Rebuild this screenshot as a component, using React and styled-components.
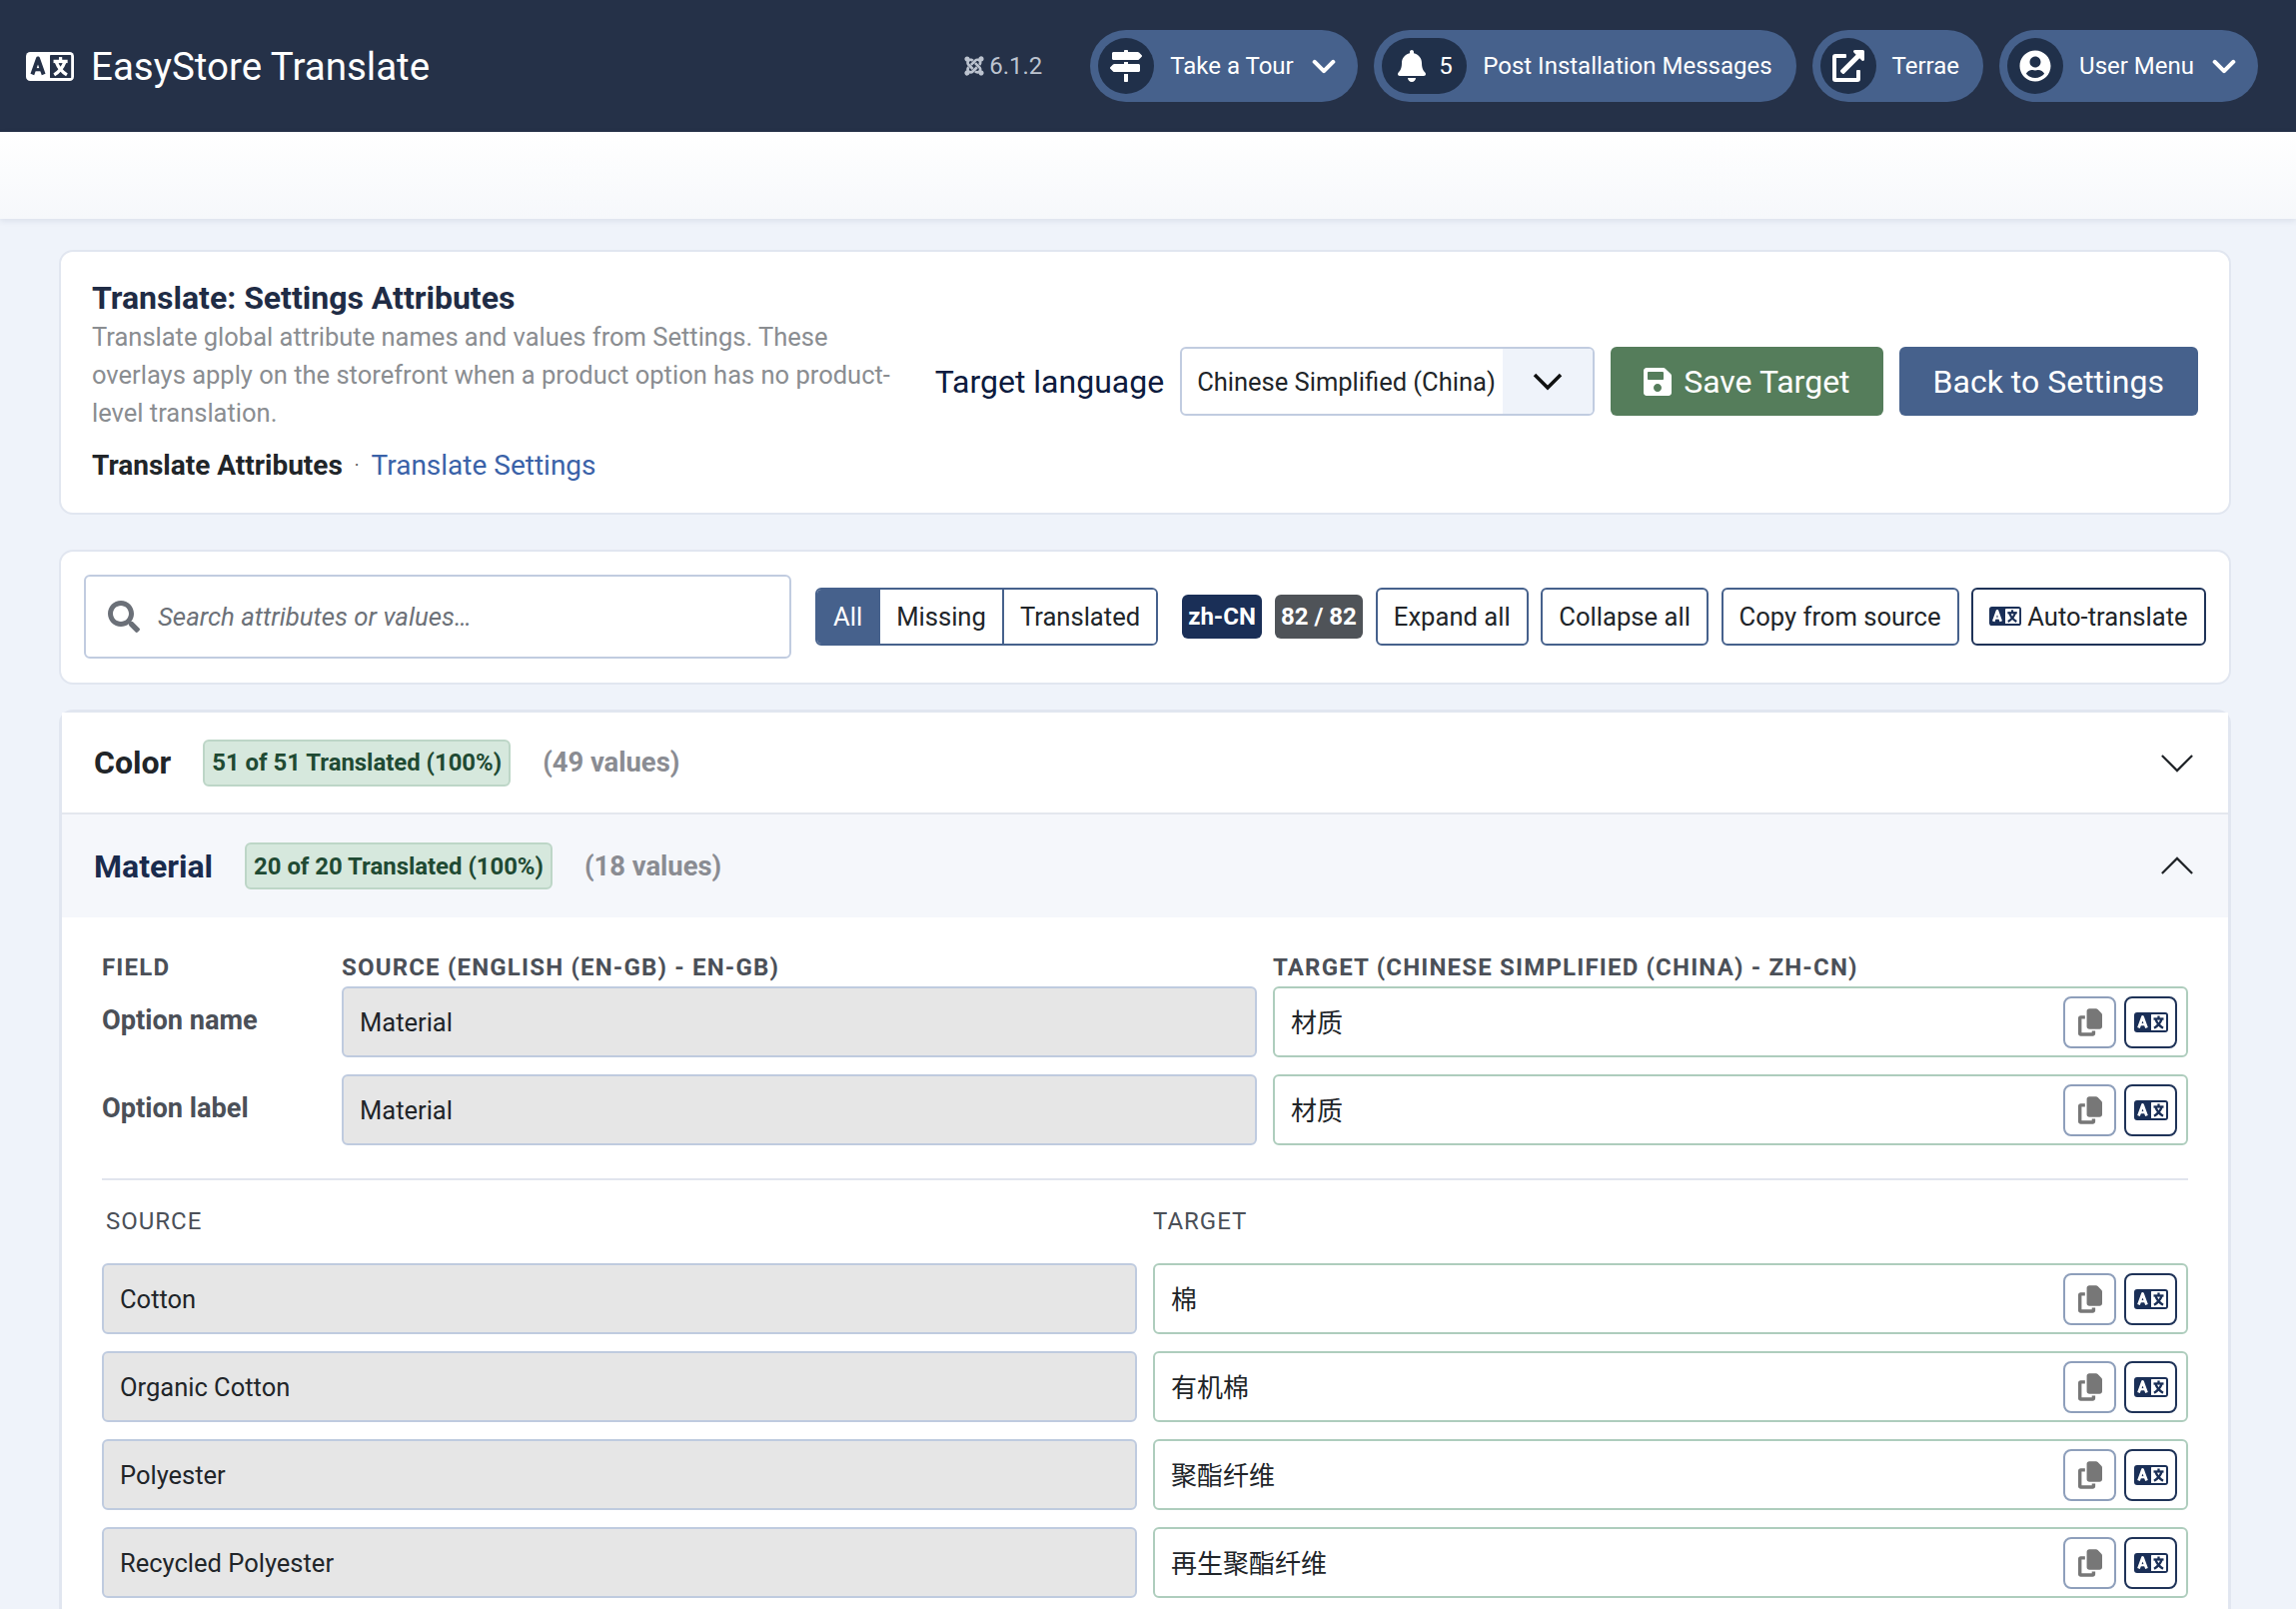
import React from 'react'
import styled, { createGlobalStyle } from 'styled-components'
import { FaMapSigns, FaBell, FaExternalLinkAlt, FaUserCircle, FaJoomla, FaSave, FaSearch } from 'react-icons/fa'
import { FaCopy } from 'react-icons/fa6'

const GlobalStyle = createGlobalStyle`
  html, body {
    margin: 0;
    height: 100%;
    overflow: hidden;
    background: #eff3fa;
    font-family: Roboto, "Noto Sans CJK SC", sans-serif;
    color: #212529;
  }
  * { box-sizing: border-box; }
`

const Header = styled.header`
  height: 132px;
  background: #253148;
  display: flex;
  align-items: center;
  padding: 0 38px 0 26px;
`

const Brand = styled.div`
  display: flex;
  align-items: center;
  gap: 17px;
  color: #fff;
  font-size: 38.5px;
  flex: 1;
  svg { width: 48px; height: 29px; }
`

const Version = styled.div`
  display: flex;
  align-items: center;
  gap: 4px;
  color: #bcc3cf;
  font-size: 24px;
  margin-right: 48px;
  svg { width: 22px; height: 22px; }
`

const Pills = styled.nav`
  display: flex;
  gap: 16px;
`

const Pill = styled.div`
  height: 72px;
  background: #46618c;
  border-radius: 36px;
  display: flex;
  align-items: center;
  padding: 0 ${p => p.$end}px 0 8px;
  color: #fff;
  font-size: 24px;
  white-space: nowrap;
`

const PillIcon = styled.span`
  height: 56px;
  min-width: 56px;
  padding: 0 ${p => (p.$wide ? 14.5 : 0)}px;
  border-radius: 28px;
  background: #20304a;
  display: flex;
  align-items: center;
  justify-content: center;
  gap: 11px;
  margin-right: 16px;
  svg { width: 32px; height: 32px; }
`

const PillChevron = styled.svg`
  width: 24px;
  height: 15px;
  margin-left: 18px;
  fill: none;
  stroke: #fff;
  stroke-width: 4.5;
  stroke-linecap: round;
  stroke-linejoin: round;
`

const SubBar = styled.div`
  height: 87px;
  background: linear-gradient(#ffffff, #f6f8fb);
  box-shadow: 0 2px 6px rgba(40, 60, 100, 0.1);
`

const Main = styled.main`
  padding: 31px 65px 0 59px;
  display: flex;
  flex-direction: column;
`

const Card = styled.section`
  background: #fff;
  border: 2px solid #e1e6f0;
  border-radius: 14px;
  margin-bottom: ${p => p.$gap || 0}px;
`

const TitleCard = styled(Card)`
  height: 265px;
  padding: 26px 31px 0 31px;
  display: flex;
`

const Intro = styled.div`
  width: 810px;
  flex: none;
`

const Title = styled.h1`
  margin: 0;
  font-size: 32px;
  line-height: 40px;
  font-weight: 700;
  color: #1f2c45;
`

const Lead = styled.p`
  margin: 0;
  font-size: 25.5px;
  line-height: 38px;
  color: #8a8d91;
`

const Crumbs = styled.div`
  margin-top: 15px;
  font-size: 28px;
  line-height: 38px;
  display: flex;
  align-items: center;
  gap: 12px;
  color: #3a62a8;
  b { color: #212529; font-weight: 700; }
  i { color: #555; font-style: normal; font-size: 18px; }
`

const Actions = styled.div`
  flex: 1;
  display: flex;
  align-items: center;
  justify-content: flex-end;
  gap: 16px;
  padding-bottom: 28px;
  white-space: nowrap;
`

const ActionLabel = styled.span`
  font-size: 32px;
  color: #0d1b3e;
`

const Select = styled.div`
  width: 415px;
  height: 69px;
  background: #fff;
  border: 2px solid #c1cce0;
  border-radius: 6px;
  display: flex;
  align-items: center;
  justify-content: space-between;
  padding-left: 15px;
  font-size: 25.5px;
  overflow: hidden;
`

const SelectArrow = styled.span`
  width: 90px;
  height: 100%;
  background: #eff3fa;
  display: flex;
  align-items: center;
  justify-content: center;
  svg { width: 30px; height: 18px; fill: none; stroke: #111; stroke-width: 3.5; }
`

const Solid = styled.div`
  height: 69px;
  padding: 0 ${p => p.$pad}px;
  background: ${p => p.$bg};
  color: #fff;
  border-radius: 6px;
  font-size: 32px;
  display: flex;
  align-items: center;
  gap: 12px;
  svg { width: 28px; height: 32px; }
`

const ToolCard = styled(Card)`
  height: 135px;
  padding: 0 23px 2px;
  display: flex;
  align-items: center;
  white-space: nowrap;
`

const Search = styled.div`
  width: 708px;
  height: 84px;
  border: 2px solid #c1cce0;
  border-radius: 6px;
  display: flex;
  align-items: center;
  padding-left: 22px;
  gap: 18px;
  margin-right: 24px;
  font-size: 25.8px;
  font-style: italic;
  color: #6c7178;
  svg { width: 32px; height: 32px; color: #6b7078; }
`

const Segments = styled.div`
  display: flex;
  height: 58px;
  border: 2px solid #46618c;
  border-radius: 6px;
  overflow: hidden;
  margin-right: 24px;
`

const Segment = styled.span`
  padding: 0 16px;
  display: flex;
  align-items: center;
  font-size: 25.6px;
  background: ${p => (p.$active ? '#46618c' : '#fff')};
  color: ${p => (p.$active ? '#fff' : '#212529')};
  & + & { border-left: 2px solid #46618c; }
`

const Tag = styled.span`
  height: 44px;
  padding: 0 6px;
  margin-right: 13px;
  display: flex;
  align-items: center;
  background: ${p => p.$bg};
  color: #fff;
  font-size: 24px;
  font-weight: 700;
  border-radius: 6px;
`

const ToolButton = styled.div`
  height: 58px;
  padding: 0 16px;
  margin-right: 12.7px;
  display: flex;
  align-items: center;
  gap: 6px;
  background: #fff;
  border: 2px solid ${p => (p.$dark ? '#1f3358' : '#46618c')};
  border-radius: 6px;
  font-size: 25.6px;
  &:last-child { margin-right: 0; }
  svg { width: 32px; height: 19px; color: #1a2f57; }
`

const AccordionCard = styled(Card)`
  border-width: 3px 3px 0 3px;
  border-radius: 14px 14px 0 0;
`

const AccordionRow = styled.div`
  height: ${p => p.$h}px;
  display: flex;
  align-items: center;
  padding: 0 34px 0 32px;
  background: ${p => (p.$open ? '#f5f7fb' : '#fff')};
  ${p => !p.$open && 'border-bottom: 2px solid #e4e7ee;'}
`

const RowName = styled.span`
  font-size: 32px;
  font-weight: 700;
  color: ${p => (p.$open ? '#1a2b4d' : '#212529')};
  margin-right: 32px;
`

const Badge = styled.span`
  height: 47px;
  padding: 0 7px;
  display: flex;
  align-items: center;
  background: #d6e8dd;
  border: 2px solid #bdd6c7;
  border-radius: 6px;
  color: #1f4a33;
  font-size: 23.9px;
  font-weight: 700;
`

const ValueCount = styled.span`
  font-size: 27.4px;
  font-weight: 700;
  color: #8a8c92;
  margin-left: 32px;
  flex: 1;
`

const RowChevron = styled.svg`
  width: 34px;
  height: 19px;
  fill: none;
  stroke: #212529;
  stroke-width: 2.4;
`

const Body = styled.div`
  padding: 36px 40px 60px 40px;
`

const FieldGrid = styled.div`
  display: grid;
  grid-template-columns: 224px 1fr 1fr;
  column-gap: 16px;
`

const FieldHead = styled.div`
  font-size: 24px;
  line-height: 28px;
  margin-bottom: 5px;
  font-weight: 700;
  letter-spacing: 1.18px;
  color: #4b5058;
  text-transform: uppercase;
`

const FieldName = styled.div`
  font-size: 27.2px;
  font-weight: 700;
  color: #4b5058;
  line-height: 68px;
  margin-bottom: 17px;
`

const Source = styled.div`
  height: 71px;
  padding: 0 16px;
  margin-bottom: 17px;
  display: flex;
  align-items: center;
  background: #e6e6e6;
  border: 2px solid #bfcbdf;
  border-radius: 6px;
  font-size: 25.5px;
`

const Target = styled(Source)`
  background: #fff;
  border-color: #aecdbd;
  justify-content: space-between;
  padding-right: 9px;
`

const TargetText = styled.span`
  font-size: 26px;
  margin-bottom: 3px;
`

const IconButtons = styled.span`
  display: flex;
  gap: 8px;
`

const IconButton = styled.span`
  width: 53px;
  height: 52px;
  display: flex;
  align-items: center;
  justify-content: center;
  border: 2px solid ${p => (p.$dark ? '#1f3358' : '#8e9fbb')};
  border-radius: 8px;
  color: ${p => (p.$dark ? '#1a2f57' : '#777')};
  svg {
    width: ${p => (p.$dark ? 34 : 24)}px;
    height: ${p => (p.$dark ? 20 : 28)}px;
  }
`

const Divider = styled.hr`
  margin: 16px 0 0;
  border: 0;
  border-top: 2px solid #e1e5ee;
`

const ValueGrid = styled.div`
  display: grid;
  grid-template-columns: 1fr 1fr;
  column-gap: 16px;
`

const ValueHead = styled.div`
  font-size: 24px;
  letter-spacing: 1px;
  line-height: 28px;
  color: #4b5058;
  padding: 27px 0 28px ${p => p.$pad}px;
  text-transform: uppercase;
`

// the language badge: a solid tile, an A on the left and a small sign on a cut out panel
const LangIcon = ({ hole }) => (
  <svg viewBox="0 0 34 20" preserveAspectRatio="none">
    <rect width="34" height="20" rx="3" fill="currentColor" />
    <rect x="17" y="2" width="15" height="16" rx="0.5" fill={hole} />
    <g fill="none" stroke={hole} strokeLinejoin="round">
      <polyline points="4.5,15.5 8.5,4.5 12.5,15.5" strokeWidth="2.8" />
      <line x1="6" y1="12.2" x2="11" y2="12.2" strokeWidth="2.2" />
    </g>
    <g fill="none" stroke="currentColor" strokeWidth="2.3">
      <line x1="24.5" y1="3.5" x2="24.5" y2="6.5" />
      <line x1="19.5" y1="6.5" x2="29.5" y2="6.5" />
      <path d="M21.5 7C23 11 26 14 29 15.8" />
      <path d="M27.5 7C26 11 23 14 20 15.8" />
    </g>
  </svg>
)

const RowTools = () => (
  <IconButtons>
    <IconButton><FaCopy /></IconButton>
    <IconButton $dark><LangIcon hole="#fff" /></IconButton>
  </IconButtons>
)

const fields = [
  ['Option name', 'Material', '材质'],
  ['Option label', 'Material', '材质'],
]

const values = [
  ['Cotton', '棉'],
  ['Organic Cotton', '有机棉'],
  ['Polyester', '聚酯纤维'],
  ['Recycled Polyester', '再生聚酯纤维'],
]

export default function App() {
  return (
    <>
      <GlobalStyle />
      <Header>
        <Brand><LangIcon hole="#253148" />EasyStore Translate</Brand>
        <Version><FaJoomla />6.1.2</Version>
        <Pills>
          <Pill $end={22}>
            <PillIcon><FaMapSigns /></PillIcon>
            Take a Tour
            <PillChevron viewBox="0 0 26 16"><polyline points="3,3 13,13 23,3" /></PillChevron>
          </Pill>
          <Pill $end={24}>
            <PillIcon $wide><FaBell />5</PillIcon>
            Post Installation Messages
          </Pill>
          <Pill $end={24}>
            <PillIcon><FaExternalLinkAlt /></PillIcon>
            Terrae
          </Pill>
          <Pill $end={22}>
            <PillIcon><FaUserCircle /></PillIcon>
            User Menu
            <PillChevron viewBox="0 0 26 16"><polyline points="3,3 13,13 23,3" /></PillChevron>
          </Pill>
        </Pills>
      </Header>
      <SubBar />
      <Main>
        <TitleCard $gap={35}>
          <Intro>
            <Title>Translate: Settings Attributes</Title>
            <Lead>
              Translate global attribute names and values from Settings. These overlays apply on the
              storefront when a product option has no product-level translation.
            </Lead>
            <Crumbs><b>Translate Attributes</b><i>·</i>Translate Settings</Crumbs>
          </Intro>
          <Actions>
            <ActionLabel>Target language</ActionLabel>
            <Select>
              Chinese Simplified (China)
              <SelectArrow>
                <svg viewBox="0 0 30 18"><polyline points="2,2 15,15 28,2" /></svg>
              </SelectArrow>
            </Select>
            <Solid $bg="#557d5b" $pad={33}><FaSave />Save Target</Solid>
            <Solid $bg="#46618c" $pad={34}>Back to Settings</Solid>
          </Actions>
        </TitleCard>
        <ToolCard $gap={25}>
          <Search><FaSearch />Search attributes or values…</Search>
          <Segments>
            <Segment $active>All</Segment>
            <Segment>Missing</Segment>
            <Segment>Translated</Segment>
          </Segments>
          <Tag $bg="#1a2f57">zh-CN</Tag>
          <Tag $bg="#4f5358">82 / 82</Tag>
          <ToolButton>Expand all</ToolButton>
          <ToolButton>Collapse all</ToolButton>
          <ToolButton>Copy from source</ToolButton>
          <ToolButton $dark><LangIcon hole="#fff" />Auto-translate</ToolButton>
        </ToolCard>
        <AccordionCard>
          <AccordionRow $h={102}>
            <RowName>Color</RowName>
            <Badge>51 of 51 Translated (100%)</Badge>
            <ValueCount>(49 values)</ValueCount>
            <RowChevron viewBox="0 0 36 20"><polyline points="2,2 18,18 34,2" /></RowChevron>
          </AccordionRow>
          <AccordionRow $h={103} $open>
            <RowName $open>Material</RowName>
            <Badge>20 of 20 Translated (100%)</Badge>
            <ValueCount>(18 values)</ValueCount>
            <RowChevron viewBox="0 0 36 20"><polyline points="2,18 18,2 34,18" /></RowChevron>
          </AccordionRow>
          <Body>
            <FieldGrid>
              <FieldHead>Field</FieldHead>
              <FieldHead>Source (English (en-GB) - en-GB)</FieldHead>
              <FieldHead>Target (Chinese Simplified (China) - zh-CN)</FieldHead>
              {fields.map(([name, source, target]) => (
                <React.Fragment key={name}>
                  <FieldName>{name}</FieldName>
                  <Source>{source}</Source>
                  <Target><TargetText>{target}</TargetText><RowTools /></Target>
                </React.Fragment>
              ))}
            </FieldGrid>
            <Divider />
            <ValueGrid>
              <ValueHead $pad={4}>Source</ValueHead>
              <ValueHead $pad={0}>Target</ValueHead>
              {values.map(([source, target]) => (
                <React.Fragment key={source}>
                  <Source>{source}</Source>
                  <Target><TargetText>{target}</TargetText><RowTools /></Target>
                </React.Fragment>
              ))}
            </ValueGrid>
          </Body>
        </AccordionCard>
      </Main>
    </>
  )
}
